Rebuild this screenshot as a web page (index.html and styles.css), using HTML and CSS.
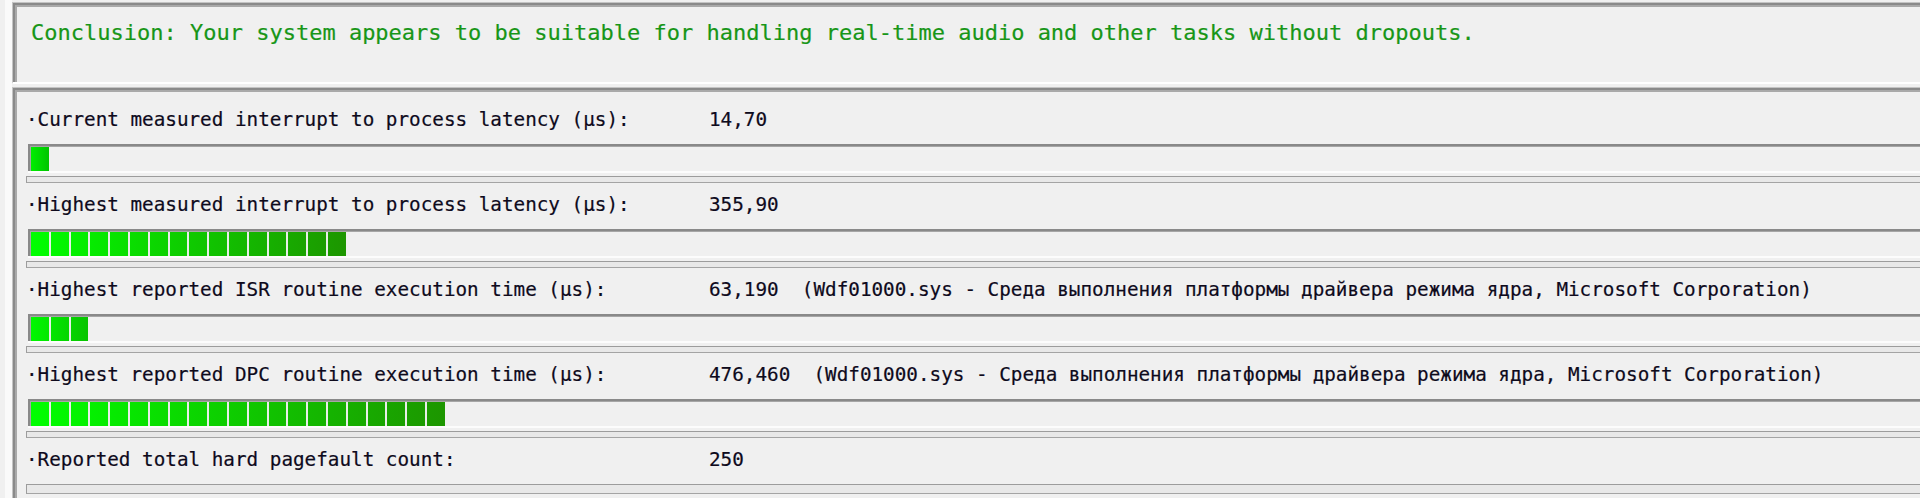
FILE: index.html
```html
<!DOCTYPE html>
<html lang="en">
<head>
<meta charset="utf-8">
<title>LatencyMon results</title>
<link rel="stylesheet" href="styles.css">
</head>
<body>
<div class="screen">
  <div class="gutter"></div>
  <div class="main">
    <div class="panel conclusion">
      <p class="conclusion-text">Conclusion: Your system appears to be suitable for handling real-time audio and other tasks without dropouts.</p>
    </div>
    <div class="panel stats">
      <div class="row">
        <div class="label-line"><span class="label">·Current measured interrupt to process latency (µs):</span><span class="value">14,70</span></div>
        <div class="trough"><div class="fill fill-short" style="width:17.8px"></div></div>
        <div class="strip"></div>
      </div>
      <div class="row">
        <div class="label-line"><span class="label">·Highest measured interrupt to process latency (µs):</span><span class="value">355,90</span></div>
        <div class="trough"><div class="fill fill-long" style="width:314.8px"></div></div>
        <div class="strip"></div>
      </div>
      <div class="row">
        <div class="label-line"><span class="label">·Highest reported ISR routine execution time (µs):</span><span class="value">63,190  (Wdf01000.sys - Среда выполнения платформы драйвера режима ядра, Microsoft Corporation)</span></div>
        <div class="trough"><div class="fill fill-mid" style="width:57.4px"></div></div>
        <div class="strip"></div>
      </div>
      <div class="row">
        <div class="label-line"><span class="label">·Highest reported DPC routine execution time (µs):</span><span class="value">476,460  (Wdf01000.sys - Среда выполнения платформы драйвера режима ядра, Microsoft Corporation)</span></div>
        <div class="trough"><div class="fill fill-long" style="width:413.8px"></div></div>
        <div class="strip"></div>
      </div>
      <div class="row">
        <div class="label-line"><span class="label">·Reported total hard pagefault count:</span><span class="value">250</span></div>
        <div class="strip strip-tall"></div>
      </div>
    </div>
  </div>
</div>
</body>
</html>
```
FILE: styles.css
```css
html, body {
  margin: 0;
  padding: 0;
  height: 100%;
  overflow: hidden;
  background: #f0f0f0;
}

.screen {
  display: flex;
  height: 498px;
  font-family: "DejaVu Sans Mono", "Liberation Mono", monospace;
}

.gutter {
  flex: none;
  width: 12px;
  background: linear-gradient(to right, #f0f0f0 5px, #fafafa 5px);
}

.main {
  flex: 1;
  margin-right: -20px;
  display: flex;
  flex-direction: column;
}

.panel {
  background: #f0f0f0;
  border-top: 1px solid #c4c4c4;
  border-left: 1px solid #c4c4c4;
  box-shadow: inset 2px 2px 0 #8a8a8a, inset 4px 4px 0 #a9a9a9;
}

.conclusion {
  box-sizing: border-box;
  margin-top: 2px;
  height: 82px;
  border-bottom: 2px solid #ffffff;
  padding: 17px 0 0 18px;
}

.conclusion-text {
  margin: 0;
  font-size: 22px;
  line-height: 26px;
  color: #179617;
  -webkit-text-stroke: 0.2px #179617;
  white-space: pre;
}

.stats {
  flex: 1;
  margin-top: 3px;
  padding: 10px 0 0 13px;
}

.row {
  display: flex;
  flex-direction: column;
}

.label-line {
  display: flex;
  height: 44px;
  margin-bottom: 2px;
  font-size: 19.3px;
  line-height: 44px;
  color: #0e0a1c;
  -webkit-text-stroke: 0.2px #0e0a1c;
  white-space: pre;
}

.label {
  flex: none;
  width: 683px;
}

.value {
  flex: none;
}

.trough {
  box-sizing: border-box;
  height: 29px;
  margin-left: 2px;
  padding: 3px 0 0 3px;
  border-bottom: 2px solid #fcfcfc;
  box-shadow: inset 2px 2px 0 #898989, inset 3px 3px 0 #a6a6a6;
}

.fill {
  height: 24px;
}

.fill-long {
  background-image:
    repeating-linear-gradient(to right, transparent 0 17.8px, #e8eee8 17.8px 19.8px),
    linear-gradient(to right, #00ff00, #1d9600);
}

.fill-mid {
  background-image:
    repeating-linear-gradient(to right, transparent 0 17.8px, #e8eee8 17.8px 19.8px),
    linear-gradient(to right, #00f800, #08c400);
}

.fill-short {
  background-image: linear-gradient(to right, #00ee00, #00c400);
}

.strip {
  box-sizing: border-box;
  height: 7px;
  margin-top: 3px;
  background: #e8e8e8;
  border-top: 1px solid #9c9c9c;
  border-bottom: 1px solid #a4a4a4;
  border-left: 1px solid #9c9c9c;
}

.strip-tall {
  height: 10px;
  margin-top: 0;
}
```
